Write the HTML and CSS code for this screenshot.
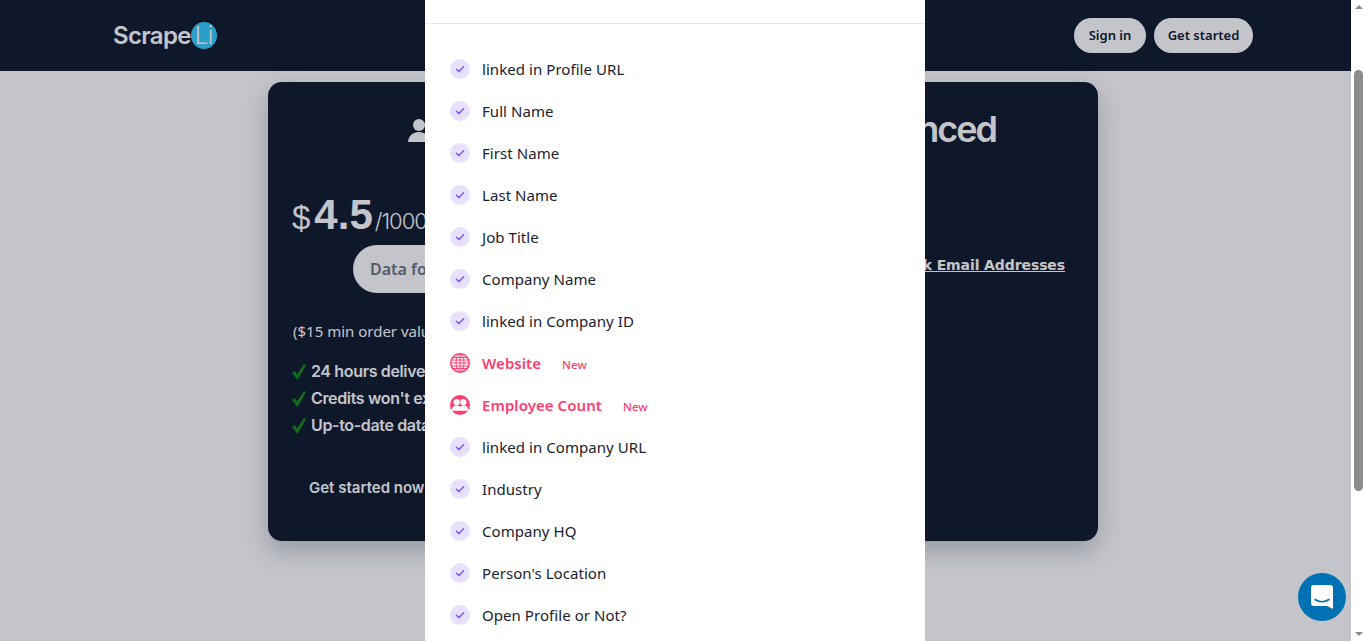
FILE: index.html
```html
<!DOCTYPE html>
<html lang="en">
<head>
<meta charset="utf-8">
<title>ScrapeLi pricing</title>
<link rel="stylesheet" href="styles.css">
</head>
<body>
<div class="shell">
  <div class="viewport">
    <header class="topbar">
      <a class="logo"><span>Scrape</span><span class="logo-badge">Li</span></a>
      <nav class="top-actions">
        <a class="top-btn top-btn-signin">Sign in</a>
        <a class="top-btn top-btn-start">Get started</a>
      </nav>
    </header>
    <main class="page">
      <section class="plans">
        <div class="plan plan-basic">
          <div class="plan-title">
            <svg class="plan-icon" viewBox="0 0 24 24"><circle cx="11" cy="7" r="6"/><path d="M0 25c0-7 5-11 11-11s11 4 11 11z"/></svg>
          </div>
          <div class="price"><span class="cur">$</span><span class="amount">4.5</span><span class="per">/1000</span></div>
          <a class="data-pill">Data format</a>
          <p class="min-order">($15 min order value)</p>
          <ul class="perks">
            <li><svg class="tick" viewBox="0 0 14 16"><path d="M0 9 2.8 7 5 10.5 12 0 14 1 5.5 16z"/></svg>24 hours delivery</li>
            <li><svg class="tick" viewBox="0 0 14 16"><path d="M0 9 2.8 7 5 10.5 12 0 14 1 5.5 16z"/></svg>Credits won't expire</li>
            <li><svg class="tick" viewBox="0 0 14 16"><path d="M0 9 2.8 7 5 10.5 12 0 14 1 5.5 16z"/></svg>Up-to-date data</li>
          </ul>
          <a class="start-link">Get started now</a>
        </div>
        <div class="plan plan-adv">
          <h2 class="adv-title">Advanced</h2>
          <a class="bulk-link">Bulk Email Addresses</a>
        </div>
      </section>
    </main>
    <div class="overlay">
      <aside class="modal">
        <div class="modal-head"></div>
        <ul class="fields">
          <li class="field"><span class="dot"><svg viewBox="0 0 20 20"><path d="M6.5 10.2 9 12.6 13.6 7.8"/></svg></span>linked in Profile URL</li>
          <li class="field"><span class="dot"><svg viewBox="0 0 20 20"><path d="M6.5 10.2 9 12.6 13.6 7.8"/></svg></span>Full Name</li>
          <li class="field"><span class="dot"><svg viewBox="0 0 20 20"><path d="M6.5 10.2 9 12.6 13.6 7.8"/></svg></span>First Name</li>
          <li class="field"><span class="dot"><svg viewBox="0 0 20 20"><path d="M6.5 10.2 9 12.6 13.6 7.8"/></svg></span>Last Name</li>
          <li class="field"><span class="dot"><svg viewBox="0 0 20 20"><path d="M6.5 10.2 9 12.6 13.6 7.8"/></svg></span>Job Title</li>
          <li class="field"><span class="dot"><svg viewBox="0 0 20 20"><path d="M6.5 10.2 9 12.6 13.6 7.8"/></svg></span>Company Name</li>
          <li class="field"><span class="dot"><svg viewBox="0 0 20 20"><path d="M6.5 10.2 9 12.6 13.6 7.8"/></svg></span>linked in Company ID</li>
          <li class="field field-new">
            <svg class="new-icon globe" viewBox="0 0 20 20"><circle class="ring" cx="10" cy="10" r="9.2"/><ellipse cx="10" cy="10" rx="4" ry="9"/><path d="M10 1v18M1.5 7h17M1.5 10h17M1.5 13h17M3 4.5h14M3 15.5h14"/></svg>
            <span class="new-name">Website</span><span class="new-tag">New</span>
          </li>
          <li class="field field-new">
            <svg class="new-icon people" viewBox="0 0 20 20"><circle class="disc" cx="10" cy="10" r="10"/><circle class="fig" cx="6.6" cy="7.2" r="3.1"/><circle class="fig" cx="13.4" cy="7.2" r="3.1"/><path class="fig" d="M1.6 15.8c0-3.4 2-5.2 5-5.2 1.3 0 2.5.4 3.4 1.2.9-.8 2.1-1.2 3.4-1.2 3 0 5 1.8 5 5.2z"/></svg>
            <span class="new-name">Employee Count</span><span class="new-tag">New</span>
          </li>
          <li class="field"><span class="dot"><svg viewBox="0 0 20 20"><path d="M6.5 10.2 9 12.6 13.6 7.8"/></svg></span>linked in Company URL</li>
          <li class="field"><span class="dot"><svg viewBox="0 0 20 20"><path d="M6.5 10.2 9 12.6 13.6 7.8"/></svg></span>Industry</li>
          <li class="field"><span class="dot"><svg viewBox="0 0 20 20"><path d="M6.5 10.2 9 12.6 13.6 7.8"/></svg></span>Company HQ</li>
          <li class="field"><span class="dot"><svg viewBox="0 0 20 20"><path d="M6.5 10.2 9 12.6 13.6 7.8"/></svg></span>Person's Location</li>
          <li class="field"><span class="dot"><svg viewBox="0 0 20 20"><path d="M6.5 10.2 9 12.6 13.6 7.8"/></svg></span>Open Profile or Not?</li>
        </ul>
      </aside>
    </div>
    <button class="chat" aria-label="Open chat">
      <svg viewBox="0 0 22 24"><path class="bubble" d="M3 0h16a3 3 0 0 1 3 3v21l-6-3H3a3 3 0 0 1-3-3V3a3 3 0 0 1 3-3z"/><path class="smile" d="M4 14.5c4 3 10 3 14 0"/></svg>
    </button>
  </div>
  <div class="scrollbar">
    <span class="arrow arrow-up"></span>
    <div class="track"><span class="thumb"></span></div>
    <span class="arrow arrow-down"></span>
  </div>
</div>
</body>
</html>
```
FILE: styles.css
```css
* { box-sizing: border-box; }
html, body { margin: 0; height: 100%; overflow: hidden; }
body { font-family: "Noto Sans", sans-serif; color: #1f2937; background: #fff; }
ul { list-style: none; margin: 0; padding: 0; }
p, h2 { margin: 0; }

.shell { display: flex; height: 641px; }
.viewport { position: relative; flex: 1; overflow: hidden; background: #fff; }

.topbar {
  display: flex; align-items: center; justify-content: space-between;
  height: 71px; padding: 0 98px 0 113px; background: #0f172a;
}
.logo { display: flex; align-items: center; font: 600 24px "Inter", sans-serif; color: #fff; letter-spacing: -.7px; }
.logo-badge {
  display: flex; align-items: center; justify-content: center;
  width: 26px; height: 27px; border-radius: 50%;
  background: #34ccff; color: #fff; font-weight: 300; font-size: 24px;
}
.top-actions { display: flex; gap: 8px; }
.top-btn {
  display: flex; align-items: center; justify-content: center; height: 35px; padding-bottom: 1px;
  border-radius: 18px; background: #fff; color: #0f172a;
  font-size: 13px; font-weight: 600;
}
.top-btn-signin { width: 72px; }
.top-btn-start { width: 99px; }

.page { padding: 11px 0 0 268px; }
.plans {
  display: grid; grid-template-columns: 1fr 1fr; width: 830px; height: 459px;
  border-radius: 14px; background: #0f172a; color: #fff;
  box-shadow: 0 10px 25px rgba(15, 23, 42, .25);
}
.plan { position: relative; }
.plan-basic { padding: 30px 0 0 24px; }
.plan-title { display: flex; align-items: center; height: 36px; margin-left: 116px; }
.plan-icon { width: 24px; height: 24px; fill: currentColor; flex: none; }
.price { display: flex; align-items: baseline; margin-top: 43px; height: 49px; }
.cur { font: 400 33px "Liberation Sans", sans-serif; margin-right: 4px; }
.amount { font: 700 42px "Liberation Sans", sans-serif; margin-right: 2px; }
.per { font: 300 22px "Inter", sans-serif; letter-spacing: -1px; }
.data-pill {
  display: flex; align-items: center; width: 260px; height: 48px; margin: 5px 0 0 61px;
  padding-left: 17px; border-radius: 24px; background: #fff; color: #6b7280;
  font-size: 16px; font-weight: 600;
}
.min-order { margin-top: 26px; margin-left: 1px; font-size: 15px; line-height: 24px; }
.perks { margin-top: 15px; font: 600 16px/27px "Inter", sans-serif; letter-spacing: -.35px; }
.perks li { display: flex; align-items: center; gap: 5px; }
.tick { width: 14px; height: 16px; fill: #0c8a14; flex: none; }
.start-link { display: block; margin: 37px 0 0 17px; font: 600 15px/24px "Inter", sans-serif; }
.adv-title {
  position: absolute; right: 102px; top: 29px; white-space: nowrap;
  font: 600 36px/1 "Inter", sans-serif; letter-spacing: -2px;
}
.bulk-link {
  position: absolute; right: 33px; top: 174px; font: 700 14px/18px "DejaVu Sans", sans-serif;
  letter-spacing: -.1px; text-decoration: underline; white-space: nowrap;
}

.overlay { position: absolute; inset: 0; background: rgba(15, 23, 42, .25); }
.modal { position: absolute; top: 0; bottom: 0; left: 425px; width: 500px; background: #fff; overflow: hidden; }
.modal-head { height: 24px; border-bottom: 1px solid #e5e7eb; }
.fields { padding: 24px 0 0 25px; }
.field { display: flex; align-items: center; height: 42px; font-size: 15px; letter-spacing: .06px; color: #1a2230; }
.dot {
  display: flex; width: 20px; height: 20px; margin-right: 12px; border-radius: 50%;
  background: #e9e0ff;
}
.dot svg { width: 20px; height: 20px; fill: none; stroke: #7c5cf6; stroke-width: 1.5; stroke-linecap: round; stroke-linejoin: round; }
.new-icon { width: 20px; height: 20px; margin-right: 12px; flex: none; }
.globe { fill: none; stroke: #ff3d71; stroke-width: 1; }
.globe .ring { stroke-width: 1.6; }
.people .disc { fill: #ff3d71; }
.people .fig { fill: #fff; }
.new-name { color: #ff3d71; font-weight: 600; }
.new-tag { margin: 2px 0 0 21px; color: #ff3d71; font-size: 11.5px; font-weight: 500; }

.chat {
  position: absolute; left: 1298px; top: 573px; display: flex; align-items: center; justify-content: center;
  width: 48px; height: 48px; padding: 0; border: 0; border-radius: 50%;
  background: #0071b2;
}
.chat svg { width: 22px; height: 24px; }
.bubble { fill: #fff; }
.smile { fill: none; stroke: #0071b2; stroke-width: 1.6; stroke-linecap: round; }

.scrollbar { display: flex; flex-direction: column; width: 15px; background: #fff; }
.arrow { display: block; width: 0; height: 0; margin: 5px auto; border-left: 4px solid transparent; border-right: 4px solid transparent; }
.arrow-up { border-bottom: 4px solid #8c8c8c; }
.arrow-down { border-top: 4px solid #8c8c8c; }
.track { flex: 1; padding: 56px 3px 0; }
.thumb { display: block; width: 9px; height: 421px; border-radius: 5px; background: #8c8c8c; }
```
